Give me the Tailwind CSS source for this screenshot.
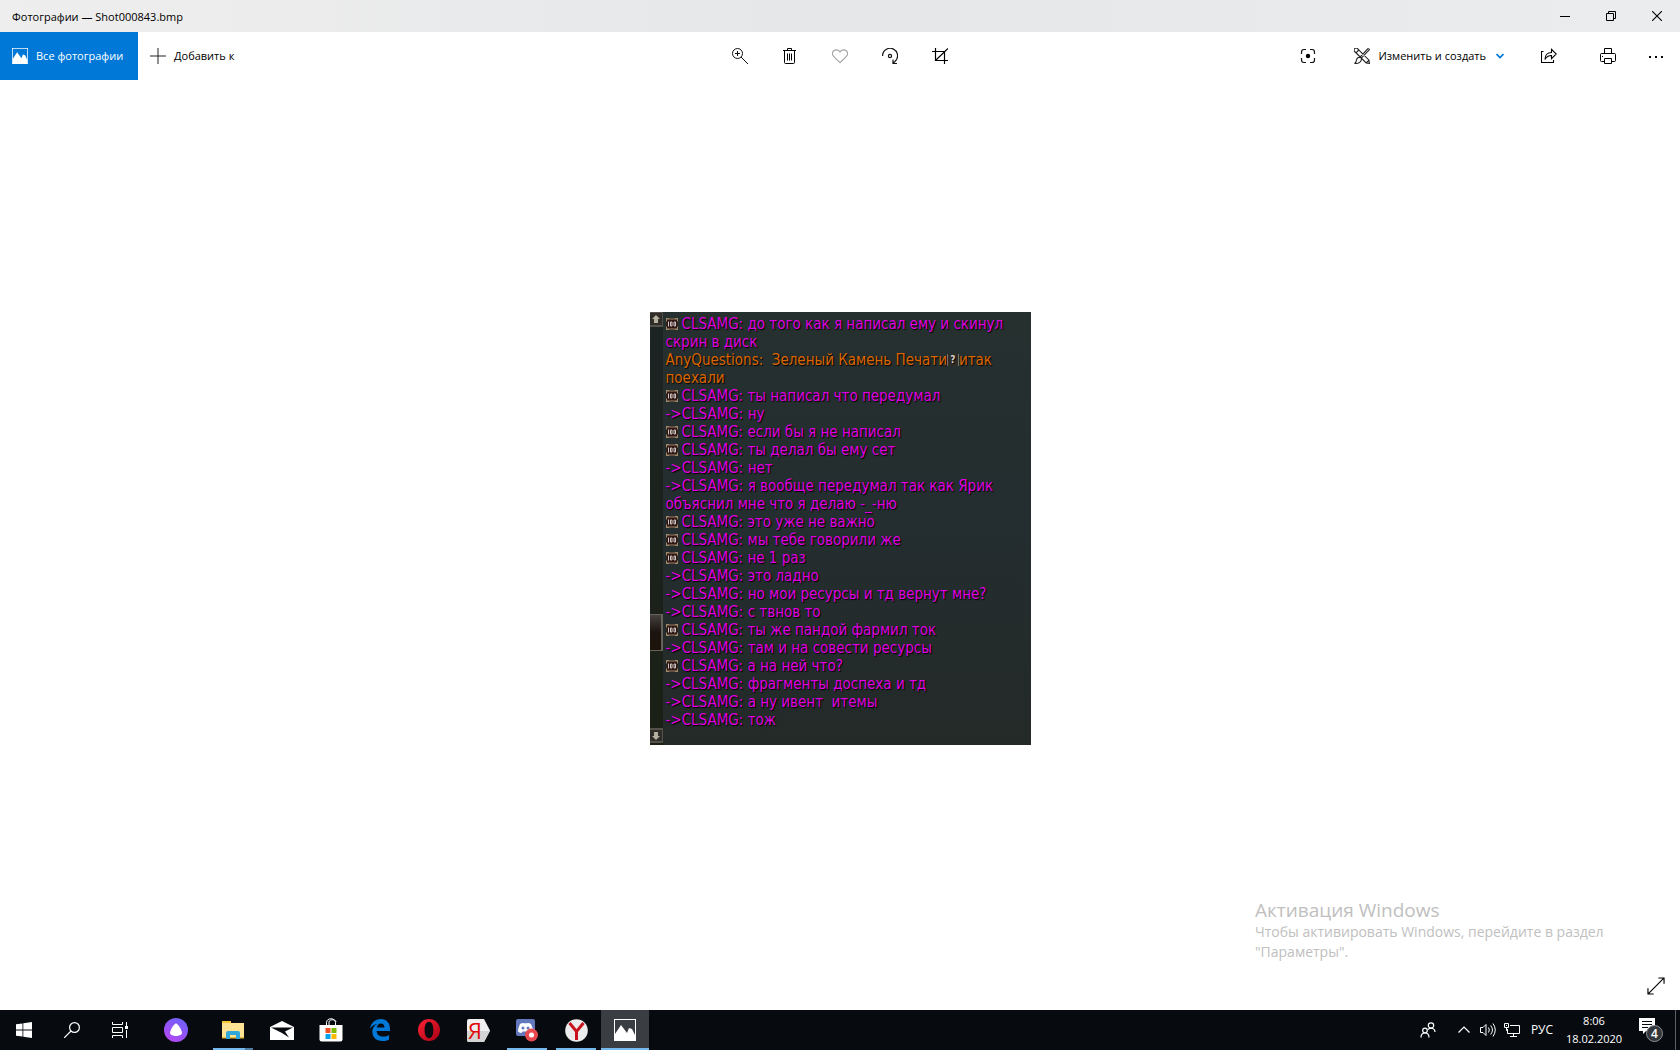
<!DOCTYPE html>
<html lang="ru">
<head>
    <meta charset="UTF-8">
    <meta name="viewport" content="width=device-width, initial-scale=1.0">
    <title>Фотографии — Shot000843.bmp</title>
    <script src="https://cdn.jsdelivr.net/npm/@tailwindcss/browser@4"></script>
</head>
<body class="h-screen flex flex-col overflow-hidden bg-white text-black text-[11px] font-['Open_Sans','Noto_Sans',sans-serif]">

    <!-- Shared icons -->
    <svg class="hidden">
        <symbol id="badge" viewBox="0 0 12 12">
            <rect width="12" height="12" fill="#65503f"/>
            <path d="M1 2h10v8H1z" fill="#2e1715"/>
            <path d="M0 0h3v1H1v2H0zM9 0h3v3h-1V1H9zM0 9h1v2h2v1H0zM11 9h1v3H9v-1h2z" fill="#a08a6c"/>
            <path d="M0 4h1v4H0zM11 4h1v4h-1z" fill="#2a2423"/>
            <path d="M2.5 3.500v5M4.500 4h1.500v4H4.500zM8 4h1.500v4H8z" fill="none" stroke="#cfc5c0" stroke-width="1"/>
        </symbol>
        <symbol id="photo" viewBox="0 0 22 22">
            <rect x=".5" y=".5" width="21" height="21" fill="none" stroke="#fff"/>
            <path d="M1 15l6-9 6 8 2-5 3 1 3 6v6H1z" fill="#fff"/>
        </symbol>
    </svg>

    <!-- Title bar -->
    <header class="h-8 shrink-0 flex items-center justify-between bg-linear-to-r from-[#eeeeee] via-[#e6e7e9] to-[#ebeced]">
        <h1 class="pl-3 pt-[2px]">Фотографии — Shot000843.bmp</h1>
        <div class="flex h-full">
            <button class="w-[46px] flex items-center justify-center" aria-label="Свернуть">
                <svg class="w-[10px] h-[10px]" viewBox="0 0 10 10"><path d="M0 5.500h10" stroke="#000"/></svg>
            </button>
            <button class="w-[46px] flex items-center justify-center" aria-label="Восстановить">
                <svg class="w-[10px] h-[10px]" viewBox="0 0 10 10" fill="none" stroke="#000"><path d="M.5 2.500h7v7h-7zM2.500 2.500v-2h7v7h-2"/></svg>
            </button>
            <button class="w-[46px] flex items-center justify-center" aria-label="Закрыть">
                <svg class="w-[10px] h-[10px]" viewBox="0 0 10 10" stroke="#000" stroke-width="1.100"><path d="M0 0l10 10M10 0L0 10"/></svg>
            </button>
        </div>
    </header>

    <!-- Toolbar -->
    <nav class="h-12 shrink-0 grid grid-cols-[1fr_auto_1fr] items-stretch">
        <div class="flex">
            <button class="w-[138px] pl-3 flex items-center gap-2 bg-[#0078d7] text-white whitespace-nowrap">
                <svg class="w-4 h-4 shrink-0"><use href="#photo"/></svg>
                Все фотографии
            </button>
            <button class="pl-3 flex items-center gap-2 whitespace-nowrap">
                <svg class="w-4 h-4" viewBox="0 0 16 16" stroke="#222"><path d="M0 8h16M8 0v16" stroke-width="1"/></svg>
                Добавить к
            </button>
        </div>

        <div class="flex">
            <button class="w-[50px] flex items-center justify-center" aria-label="Увеличить">
                <svg class="w-4 h-4" viewBox="0 0 16 16" fill="none" stroke="#111"><circle cx="5.500" cy="5.500" r="5"/><path d="M9 9l7 7M3 5.500h5M5.500 3v5"/></svg>
            </button>
            <button class="w-[50px] flex items-center justify-center" aria-label="Удалить">
                <svg class="w-4 h-4" viewBox="0 0 16 16" fill="none" stroke="#000"><path d="M1 2.500h13M5.500 2.500v-2h4v2M2.500 3v11.500q0 1 1 1h8q1 0 1-1V3M5.500 5.500v7M7.500 5.500v7M9.500 5.500v7"/></svg>
            </button>
            <button class="w-[50px] flex items-center justify-center" aria-label="Добавить в избранное">
                <svg class="w-4 h-4" viewBox="0 0 16 16" fill="none" stroke="#a5a5a5" stroke-width="1.200"><path d="M8 14.700L1.600 8.300a3.900 3.900 0 0 1 0-5.400 3.700 3.700 0 0 1 5.300 0L8 4l1.100-1.100a3.700 3.700 0 0 1 5.300 0 3.900 3.900 0 0 1 0 5.400z"/></svg>
            </button>
            <button class="w-[50px] flex items-center justify-center" aria-label="Повернуть">
                <svg class="w-4 h-4" viewBox="0 0 16 16" fill="none" stroke="#111" stroke-width="1.200"><path d="M.6 8a7.500 7.500 0 1 1 11.900 5.900l-1.500 1.100M11 11.500v4h4"/><circle cx="8" cy="8" r="1.600"/></svg>
            </button>
            <button class="w-[50px] flex items-center justify-center" aria-label="Обрезать">
                <svg class="w-4 h-4" viewBox="0 0 16 16" fill="none" stroke="#000" stroke-width="1.200"><path d="M0 3.500h12.500V16M3.500 0v12.500H16M3.500 12.500L16 .5"/></svg>
            </button>
        </div>

        <div class="flex justify-end">
            <button class="w-[42px] flex items-center justify-center" aria-label="Поиск по изображению">
                <svg class="w-4 h-4" viewBox="0 0 16 16" fill="none" stroke="#111" stroke-width="1.200"><path d="M1.500 6V4q0-2.500 2.500-2.500h2M10 1.500h2q2.500 0 2.500 2.500v2M14.500 10v2q0 2.500-2.500 2.500h-2M6 14.500H4q-2.500 0-2.500-2.500v-2"/><circle cx="8" cy="8" r="2.200" fill="#000" stroke="none"/></svg>
            </button>
            <button class="pl-[25px] pr-[10px] flex items-center gap-2 whitespace-nowrap">
                <svg class="w-4 h-4" viewBox="0 0 16 16" fill="none" stroke="#222" stroke-width="1.100"><path d="M3.500.6L15 12.200l.4 3.200-3.200-.4L.7 3.500A2 2 0 0 1 3.500.6zM2 4.800L4.800 2M12.200 15l2.800-2.800M6 9.200L13.800.8q1.500-.5 1.500 1.100L7 10.400M5.800 9.400q2 .2 1.600 2.200c-.5 2.700-3.500 4.200-6.900 3.800 2-.8 1.500-2.400 2.200-4.200.6-1.500 1.600-2 3.100-1.800z"/></svg>
                <span class="pr-[2px]">Изменить и создать</span>
                <svg class="w-2 h-2" viewBox="0 0 8 8" fill="none" stroke="#0078d7" stroke-width="1.700"><path d="M.5 2L4 5.500 7.500 2"/></svg>
            </button>
            <button class="w-[70px] flex items-center justify-center" aria-label="Поделиться">
                <svg class="w-4 h-4" viewBox="0 0 16 16" fill="none" stroke="#000" stroke-width="1.100"><path d="M2.500 3.500h-2v11h12V12M4 11.500c0-5 3-7 6.500-7V1.300L15.300 6l-4.800 4.700V7.500C7.500 7.500 5.500 8.500 4 11.500z"/></svg>
            </button>
            <button class="w-12 flex items-center justify-center" aria-label="Печать">
                <svg class="w-4 h-4" viewBox="0 0 16 16" fill="none" stroke="#000"><path d="M4.500 5.500v-5h7v5M4.500 13.500h-3q-1 0-1-1v-6q0-1 1-1h13q1 0 1 1v6q0 1-1 1h-3M4.500 10.500h7v5h-7zM2 8.500h1"/></svg>
            </button>
            <button class="w-12 flex items-center justify-center" aria-label="Дополнительно">
                <svg class="w-4 h-4" viewBox="0 0 16 16"><path d="M1 8h2v2H1zM7 8h2v2H7zM13 8h2v2h-2z"/></svg>
            </button>
        </div>
    </nav>

    <!-- Photo -->
    <main class="relative flex-1 flex items-center justify-center pb-[33px]">
        <figure class="w-[381px] flex items-stretch bg-linear-to-b from-[#26302f] via-[#242d2f] to-[#232a28] text-[#df00df] font-['DejaVu_Sans_Condensed','DejaVu_Sans',sans-serif] text-[15px] leading-[18px]">
            <div class="w-[13px] mr-[3px] pb-[2px] flex flex-col bg-linear-to-b from-[#1c2424] to-[#1b2015]">
                <svg class="w-[13px] h-[15px]" viewBox="0 0 13 15"><path d="M0 0h13v15H0z" fill="#54504a"/><path d="M0 1h12v12H0z" fill="#302c28"/><path d="M6 3l4 4H8v4H4V7H2z" fill="#b5af9f"/></svg>
                <div class="mt-[287px] h-[37px] bg-linear-to-b from-[#454140] via-[#1b130f] to-[#1d1409] border-y border-r-2 border-[#67635b]"></div>
                <svg class="mt-auto w-[13px] h-[15px]" viewBox="0 0 13 15"><path d="M0 0h13v15H0z" fill="#54504a"/><path d="M0 2h12v11H0z" fill="#302c28"/><path d="M6 12l4-4H8V4H4v4H2z" fill="#b5af9f"/></svg>
            </div>
            <ul class="pt-[3px] pb-4 [text-shadow:1px_1px_1px_#000] *:whitespace-pre">
                <li class="flex items-center"><svg class="w-3 h-3 mr-1"><use href="#badge"/></svg>CLSAMG: до того как я написал ему и скинул</li>
                <li>скрин в диск</li>
                <li class="flex items-center text-[#db6500]">AnyQuestions:  Зеленый Камень Печати<span class="w-3 h-3 border-x border-[#77726a] bg-[#302c28] text-[#d8d4c8] text-[10px] leading-3 text-center font-bold">?</span>итак</li>
                <li class="text-[#db6500]">поехали</li>
                <li class="flex items-center"><svg class="w-3 h-3 mr-1"><use href="#badge"/></svg>CLSAMG: ты написал что передумал</li>
                <li>-&gt;CLSAMG: ну</li>
                <li class="flex items-center"><svg class="w-3 h-3 mr-1"><use href="#badge"/></svg>CLSAMG: если бы я не написал</li>
                <li class="flex items-center"><svg class="w-3 h-3 mr-1"><use href="#badge"/></svg>CLSAMG: ты делал бы ему сет</li>
                <li>-&gt;CLSAMG: нет</li>
                <li>-&gt;CLSAMG: я вообще передумал так как Ярик</li>
                <li>объяснил мне что я делаю -_-ню</li>
                <li class="flex items-center"><svg class="w-3 h-3 mr-1"><use href="#badge"/></svg>CLSAMG: это уже не важно</li>
                <li class="flex items-center"><svg class="w-3 h-3 mr-1"><use href="#badge"/></svg>CLSAMG: мы тебе говорили же</li>
                <li class="flex items-center"><svg class="w-3 h-3 mr-1"><use href="#badge"/></svg>CLSAMG: не 1 раз</li>
                <li>-&gt;CLSAMG: это ладно</li>
                <li>-&gt;CLSAMG: но мои ресурсы и тд вернут мне?</li>
                <li>-&gt;CLSAMG: с твнов то</li>
                <li class="flex items-center"><svg class="w-3 h-3 mr-1"><use href="#badge"/></svg>CLSAMG: ты же пандой фармил ток</li>
                <li>-&gt;CLSAMG: там и на совести ресурсы</li>
                <li class="flex items-center"><svg class="w-3 h-3 mr-1"><use href="#badge"/></svg>CLSAMG: а на ней что?</li>
                <li>-&gt;CLSAMG: фрагменты доспеха и тд</li>
                <li>-&gt;CLSAMG: а ну ивент  итемы</li>
                <li>-&gt;CLSAMG: тож</li>
            </ul>
        </figure>

        <!-- Activation watermark -->
        <div class="absolute right-[49px] bottom-12 w-[376px] text-[#c0c0c0] text-[14px] leading-5">
            <p class="text-[19px] leading-6">Активация Windows</p>
            <p>Чтобы активировать Windows, перейдите в раздел<br>"Параметры".</p>
        </div>
        <button class="absolute right-[15px] bottom-[15px]" aria-label="Во весь экран">
            <svg class="w-[18px] h-[18px]" viewBox="0 0 19 19" fill="none" stroke="#000" stroke-width="1.200"><path d="M1 18L18 1M12 1h6v6M1 12v6h6"/></svg>
        </button>
    </main>

    <!-- Taskbar -->
    <footer class="h-10 shrink-0 flex justify-between bg-[#070b10] text-white">
        <div class="flex">
            <button class="w-12 flex items-center justify-center" aria-label="Пуск">
                <svg class="w-4 h-4" viewBox="0 0 16 16" fill="#fff"><path d="M0 2.300L6.500 1.400v6.200H0zM7.300 1.200L16 0v7.600H7.300zM0 8.400h6.500v6.200L0 13.700zM7.300 8.400H16V16l-8.700-1.200z"/></svg>
            </button>
            <button class="w-12 flex items-center justify-center" aria-label="Поиск">
                <svg class="w-4 h-4" viewBox="0 0 16 16" fill="none" stroke="#fff" stroke-width="1.200"><circle cx="10.500" cy="5.500" r="4.900"/><path d="M7 9l-7 7"/></svg>
            </button>
            <button class="w-12 flex items-center justify-center" aria-label="Представление задач">
                <svg class="w-4 h-4" viewBox="0 0 16 16" fill="none" stroke="#fff"><path d="M.5 0v2.500h10V0M.5 5.500h10v5H.5zM.5 16v-2.500h10V16M14.500 0v4M14.500 8v8"/><path d="M13 4h3v3h-3z" fill="#fff" stroke="none"/></svg>
            </button>
            <button class="w-12 ml-2 mr-[9px] flex items-center justify-center" aria-label="Алиса">
                <svg class="w-6 h-6" viewBox="0 0 24 24"><defs><linearGradient id="alice" x1=".8" y1="0" x2=".2" y2="1"><stop stop-color="#6b63f6"/><stop offset="1" stop-color="#b846f5"/></linearGradient></defs><circle cx="12" cy="12" r="12" fill="url(#alice)"/><path d="M12 5.500c2 0 6 7 6 9.300 0 2.500-3.500 3.200-6 3.200s-6-.7-6-3.200c0-2.300 4-9.300 6-9.300z" fill="#fff"/></svg>
            </button>
            <div class="flex gap-px">
                <button class="w-12 px-1 flex flex-col items-center" aria-label="Проводник">
                    <span class="flex-1 flex items-center pt-[2px]"><svg class="w-[22px] h-[18px]" viewBox="0 0 22 18"><path d="M0 0h9v2h13v14H0z" fill="#ffe394"/><path d="M0 0h9v2H0z" fill="#f9c72e"/><path d="M0 16h22v1.500H0z" fill="#e8b844"/><path d="M4 18v-6q0-2 2-2h10q2 0 2 2v6h-4v-4H8v4z" fill="#31a8dc"/></svg></span>
                    <span class="h-[2px] w-full flex"><i class="flex-1 bg-[#76b9ed]"></i><i class="w-2 bg-[#507ea2]"></i></span>
                </button>
                <button class="w-12 flex items-center justify-center" aria-label="Почта">
                    <svg class="w-6 h-[19px]" viewBox="0 0 24 19"><path d="M0 6l12-6 12 6v13H0z" fill="#fff"/><path d="M1 6.500h22l-8 4 4 6-7-4.500z" fill="#070b10"/></svg>
                </button>
                <button class="w-12 flex items-center justify-center" aria-label="Microsoft Store">
                    <svg class="w-6 h-6" viewBox="0 0 24 24"><path d="M7.500 7V4.500c0-5 9-5 9 0V7M10 7V4c0-3 7-3 7 0" fill="none" stroke="#fff" stroke-width="1"/><path d="M.5 7h23v14.500q0 2-2 2h-19q-2 0-2-2z" fill="#fff"/><path d="M6.500 10h5v5h-5z" fill="#f25022"/><path d="M12.500 10h5v5h-5z" fill="#7fba00"/><path d="M6.500 16h5v5h-5z" fill="#00a4ef"/><path d="M12.500 16h5v5h-5z" fill="#ffb900"/></svg>
                </button>
                <button class="w-12 flex items-center justify-center" aria-label="Microsoft Edge">
                    <svg class="w-5 h-[22px]" viewBox="0 0 20 22"><path d="M0 9.800C1 3.500 5.500 0 10.800 0 17 0 20 4.500 20 9.700V12H6.600c.2 3.700 3 5.600 6.600 5.600 2.300 0 4.200-.6 5.900-1.600v4.400C17.200 21.500 15 22 12.400 22 6.200 22 2.300 18.300 2.300 12.800 2.300 9 4.300 6.500 7.200 5 4.200 5.500 1.500 7.200 0 9.800zM6.800 8.400h7.600c0-2.500-1.300-4-3.600-4-2.200 0-3.700 1.700-4 4z" fill="#0078d7"/></svg>
                </button>
                <button class="w-12 flex items-center justify-center" aria-label="Opera">
                    <svg class="w-[22px] h-[22px]" viewBox="0 0 22 22"><defs><linearGradient id="opera" x2="1" y2="1"><stop stop-color="#ff2335"/><stop offset="1" stop-color="#a70014"/></linearGradient></defs><path fill="url(#opera)" fill-rule="evenodd" d="M11 0a11 11 0 1 1 0 22 11 11 0 0 1 0-22zM11 2.800C8.300 2.800 6.600 6 6.600 11s1.700 8.200 4.400 8.200 4.400-3.200 4.400-8.200S13.700 2.800 11 2.800z"/></svg>
                </button>
                <button class="w-12 flex items-center justify-center" aria-label="Яндекс">
                    <svg class="w-[23px] h-[23px]" viewBox="0 0 23 23"><path d="M2 0h15l6 11.500L17 23H2q-2 0-2-2V2q0-2 2-2z" fill="#f0f0f0"/><path d="M0 12h23l-6 11H2q-2 0-2-2z" fill="#d4d4d4"/><text x="8" y="20" text-anchor="middle" font-family="Open Sans, sans-serif" font-size="22" fill="#e00a0a">Я</text></svg>
                </button>
                <button class="w-12 px-1 flex flex-col items-center" aria-label="Discord">
                    <span class="flex-1 flex items-center pt-[2px]"><svg class="w-[22px] h-6" viewBox="0 0 22 24"><path d="M2 1h15q2 0 2 2v18l-4-3H2q-2 0-2-2V3q0-2 2-2z" fill="#6377bd"/><path d="M4 6q2.500-1.500 4-.8h3q1.500-.7 4 .8 2 4 2 7.500-2 1.500-3.500 1.500l-1-1.500h-6l-1 1.500Q4 15 2 13.500 2 10 4 6z" fill="#fff"/><circle cx="7" cy="10" r="1.500" fill="#6377bd"/><circle cx="12" cy="10" r="1.500" fill="#6377bd"/><circle cx="15.500" cy="17" r="6.500" fill="#e84b4f"/><circle cx="15.500" cy="17" r="2.500" fill="#fff"/></svg></span>
                    <span class="h-[2px] w-full bg-[#76b9ed]"></span>
                </button>
                <button class="w-12 px-1 flex flex-col items-center" aria-label="Яндекс Браузер">
                    <span class="flex-1 flex items-center pt-[2px]"><svg class="w-[23px] h-[23px]" viewBox="0 0 23 23"><circle cx="11.500" cy="11.500" r="11.300" fill="#ececec"/><path d="M4.500 4l7 8.500L18.500 4M11.500 12v9" fill="none" stroke="#c8151d" stroke-width="3"/></svg></span>
                    <span class="h-[2px] w-full bg-[#76b9ed]"></span>
                </button>
                <button class="w-12 flex flex-col items-center bg-[#3a3e42]" aria-label="Фотографии">
                    <span class="flex-1 flex items-center pt-[2px]"><svg class="w-[22px] h-[22px]"><use href="#photo"/></svg></span>
                    <span class="h-[2px] w-full bg-[#76b9ed]"></span>
                </button>
            </div>
        </div>

        <div class="flex">
            <button class="w-12 flex items-center justify-center" aria-label="Люди">
                <svg class="w-4 h-4" viewBox="0 0 16 16" fill="none" stroke="#fff" stroke-width="1.200"><circle cx="11" cy="3.500" r="2.700"/><circle cx="5" cy="8.500" r="2.300"/><path d="M1 15.500c0-6 8-6 8 0M8 7.500c3-2.500 7-1 7 2.500"/></svg>
            </button>
            <button class="w-6 flex items-center justify-center" aria-label="Скрытые значки">
                <svg class="w-3 h-3" viewBox="0 0 12 12" fill="none" stroke="#fff" stroke-width="1.200"><path d="M.5 8.500L6 3l5.500 5.500"/></svg>
            </button>
            <button class="w-6 flex items-center justify-center" aria-label="Громкость">
                <svg class="w-4 h-4" viewBox="0 0 16 16" fill="none" stroke="#fff"><path d="M.5 5.500H3l3-3v11l-3-3H.5zM8.500 5.500q1.700 2.500 0 5M10.700 3.500q3.500 4.500 0 9M13 1.500q4.500 6.500 0 13"/></svg>
            </button>
            <button class="w-6 flex items-center justify-center" aria-label="Сеть">
                <svg class="w-4 h-4" viewBox="0 0 16 16" fill="none" stroke="#fff"><path d="M6 3.500h9.500v8h-12V7M.5 1.500h4v4h-4zM2.500 5.500v3h1M9.500 11.500v3M6 14.500h7M2 3.500h1"/></svg>
            </button>
            <button class="w-9 text-center text-[12px]">РУС</button>
            <button class="w-[68px] mr-[3px] flex flex-col items-center justify-center leading-[18px]"><span>8:06</span><span>18.02.2020</span></button>
            <button class="w-9 pl-1 flex items-center justify-center" aria-label="Уведомления: 4">
                <svg class="w-6 h-6" viewBox="0 0 24 24"><path d="M0 0h16v13H7l-3 3v-3H0z" fill="#fff"/><path d="M3 3.500h10M3 6.500h10M3 9.500h6" stroke="#070b10"/><circle cx="15.500" cy="15.500" r="8" fill="#33373b" stroke="#8d9093"/><text x="15.500" y="20" text-anchor="middle" font-size="12" font-weight="600" fill="#fff">4</text></svg>
            </button>
            <button class="ml-2 w-[5px] border-l border-[#5c6064]" aria-label="Показать рабочий стол"></button>
        </div>
    </footer>
</body>
</html>
